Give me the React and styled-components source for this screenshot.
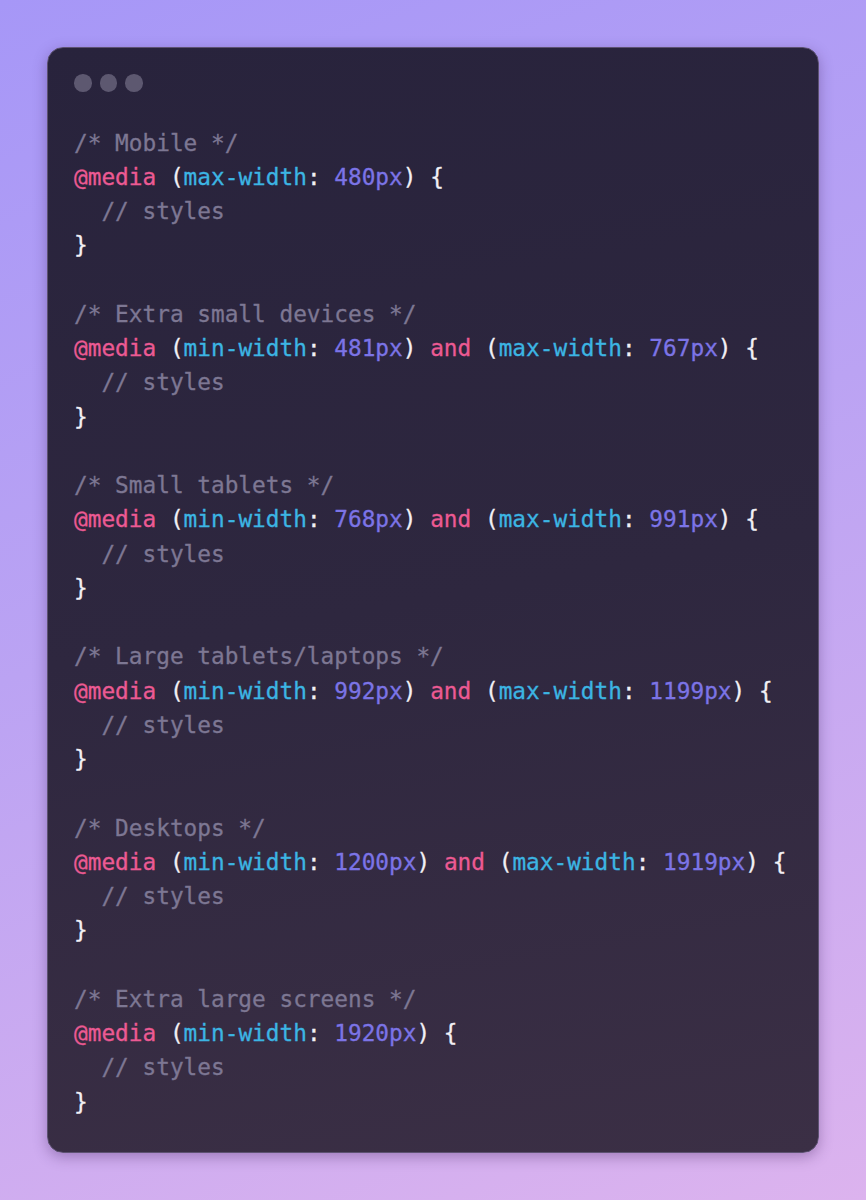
import React from "react";
import styled, { createGlobalStyle } from "styled-components";

const Global = createGlobalStyle`
  html, body {
    margin: 0;
    padding: 0;
  }
`;

const Page = styled.div`
  width: 866px;
  height: 1200px;
  box-sizing: border-box;
  padding: 47px;
  background: linear-gradient(160deg, #a697f7 0%, #bba3f3 45%, #dcb3ee 100%);
`;

const Card = styled.div`
  width: 772px;
  height: 1106px;
  box-sizing: border-box;
  border-radius: 16px;
  border: 1.5px solid #5d5272;
  background: linear-gradient(170deg, #28233c 0%, #2e273f 50%, #3b2f45 100%);
  box-shadow: 0 4px 14px rgba(60, 30, 90, 0.35);
  padding: 26px 26px;
`;

const Dots = styled.div`
  display: flex;
  gap: 8px;
  margin-bottom: 34px;
`;

const Dot = styled.span`
  width: 17.5px;
  height: 17.5px;
  border-radius: 50%;
  background: #5d5870;
`;

const Code = styled.pre`
  margin: 0;
  font-family: "DejaVu Sans Mono", "Liberation Mono", monospace;
  font-size: 22.75px;
  line-height: 34.25px;
  color: #f2f0f5;
  white-space: pre;
  -webkit-text-stroke: 0.3px currentColor;
`;

const Tok = styled.span`
  color: ${(p) => p.$c};
`;

const C = {
  comment: "#7d7793",
  at: "#ec5a93",
  prop: "#3cb5e3",
  num: "#7c74e6",
  plain: "#f2f0f5",
};

const groups = [
  { title: "Mobile", conds: [["max-width", "480px"]] },
  { title: "Extra small devices", conds: [["min-width", "481px"], ["max-width", "767px"]] },
  { title: "Small tablets", conds: [["min-width", "768px"], ["max-width", "991px"]] },
  { title: "Large tablets/laptops", conds: [["min-width", "992px"], ["max-width", "1199px"]] },
  { title: "Desktops", conds: [["min-width", "1200px"], ["max-width", "1919px"]] },
  { title: "Extra large screens", conds: [["min-width", "1920px"]] },
];

function Cond({ prop, value }) {
  return (
    <>
      (<Tok $c={C.prop}>{prop}</Tok>: <Tok $c={C.num}>{value}</Tok>)
    </>
  );
}

function Group({ title, conds, last }) {
  return (
    <>
      <Tok $c={C.comment}>{`/* ${title} */`}</Tok>
      {"\n"}
      <Tok $c={C.at}>@media</Tok>{" "}
      {conds.map(([p, v], i) => (
        <React.Fragment key={p}>
          {i > 0 && (
            <>
              {" "}
              <Tok $c={C.at}>and</Tok>{" "}
            </>
          )}
          <Cond prop={p} value={v} />
        </React.Fragment>
      ))}
      {" {\n"}
      {"  "}
      <Tok $c={C.comment}>// styles</Tok>
      {"\n}"}
      {!last && "\n\n"}
    </>
  );
}

export default function App() {
  return (
    <Page>
      <Global />
      <Card>
        <Dots>
          <Dot />
          <Dot />
          <Dot />
        </Dots>
        <Code>
          {groups.map((g, i) => (
            <Group key={g.title} {...g} last={i === groups.length - 1} />
          ))}
        </Code>
      </Card>
    </Page>
  );
}
